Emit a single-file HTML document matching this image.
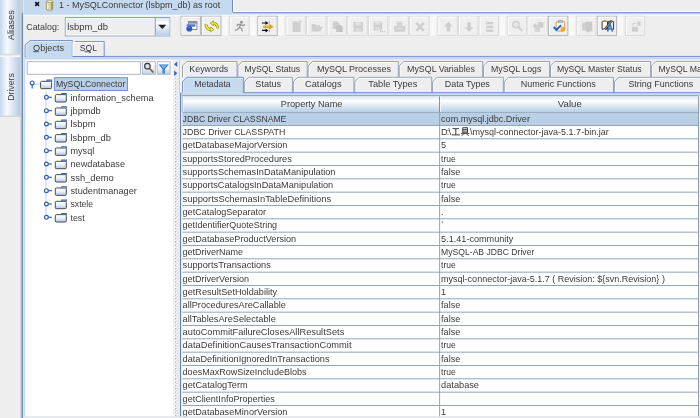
<!DOCTYPE html><html><head><meta charset="utf-8"><title>SQuirreL</title>
<style>html,body{margin:0;padding:0;background:#eeeeee;overflow:hidden}svg{display:block}text{font-family:"Liberation Sans",sans-serif;}</style></head><body>
<svg width="700" height="418" viewBox="0 0 700 418">
<defs>
<linearGradient id="gh" x1="0" y1="0" x2="1" y2="0"><stop offset="0" stop-color="#c3d7ef"/><stop offset="0.35" stop-color="#f7fafd"/><stop offset="0.65" stop-color="#d9e5f2"/><stop offset="1" stop-color="#b3cbe6"/></linearGradient>
<linearGradient id="gv" x1="0" y1="0" x2="0" y2="1"><stop offset="0" stop-color="#dde8f3"/><stop offset="0.3" stop-color="#ffffff"/><stop offset="0.6" stop-color="#dde8f3"/><stop offset="1" stop-color="#b8cfe5"/></linearGradient>
<linearGradient id="gf" x1="0" y1="0" x2="0" y2="1"><stop offset="0" stop-color="#ffffff"/><stop offset="0.6" stop-color="#e6eef7"/><stop offset="1" stop-color="#b8cfe5"/></linearGradient>
<linearGradient id="gfo" x1="0" y1="0" x2="0" y2="1"><stop offset="0" stop-color="#ffffff"/><stop offset="0.45" stop-color="#eef3fa"/><stop offset="1" stop-color="#a9c6ea"/></linearGradient>
</defs>
<rect x="0.00" y="0.00" width="700.00" height="418.00" fill="#eeeeee" />
<g opacity="0.999">
<rect x="0.00" y="0.00" width="20.20" height="54.20" fill="url(#gh)" />
<rect x="0.00" y="57.00" width="20.20" height="58.80" fill="url(#gh)" />
<rect x="0.00" y="54.20" width="20.20" height="1.30" fill="#cfd3d8" />
<rect x="0.00" y="55.50" width="20.20" height="1.50" fill="#f6f8fb" />
<rect x="0.00" y="115.80" width="20.20" height="1.20" fill="#cfd3d8" />
<rect x="20.20" y="0.00" width="1.40" height="418.00" fill="#cacdd1" />
<rect x="21.60" y="0.00" width="1.50" height="12.60" fill="#b7c8e2" />
<rect x="21.60" y="12.60" width="1.50" height="405.40" fill="#6b8ac6" />
<rect x="23.10" y="0.00" width="1.00" height="418.00" fill="#dfe8f5" />
<text transform="translate(14.3,25.2) rotate(-90)" text-anchor="middle" font-size="9.17" fill="#3a3a3a" textLength="30" lengthAdjust="spacingAndGlyphs">Aliases</text>
<text transform="translate(14.3,87) rotate(-90)" text-anchor="middle" font-size="9.17" fill="#3a3a3a" textLength="27.6" lengthAdjust="spacingAndGlyphs">Drivers</text>
<rect x="24.00" y="0.00" width="208.00" height="14.70" fill="#c6daef" />
<rect x="232.00" y="0.00" width="1.00" height="12.50" fill="#6b8ac6" />
<rect x="233.00" y="0.00" width="1.00" height="12.00" fill="#ffffff" />
<rect x="233.00" y="11.90" width="467.00" height="1.20" fill="#7f9acd" />
<rect x="234.00" y="11.00" width="466.00" height="1.00" fill="#ffffff" />
<rect x="24.00" y="13.00" width="208.00" height="1.80" fill="#c6daef" />
<rect x="233.00" y="13.10" width="467.00" height="0.90" fill="#b9cbe6" />
<rect x="233.00" y="14.00" width="467.00" height="0.90" fill="#dbe4f0" />
<rect x="24.20" y="14.80" width="675.80" height="1.30" fill="#f6f8fb" />
<path d="M35.2 2.1 L39 5.9 M39 2.1 L35.2 5.9" stroke="#111" stroke-width="1.5"/>
<g><rect x="46.4" y="1.2" width="6.4" height="8" fill="#d9d29a"/><rect x="46.4" y="1.2" width="2" height="8" fill="#f2eecb"/><rect x="51" y="1.2" width="1.8" height="8" fill="#a89e5a"/><ellipse cx="49.6" cy="1.4" rx="3.2" ry="1.3" fill="#eee9c0" stroke="#8f8750" stroke-width="0.6"/><path d="M46.4 1.2 V9 A3.2 1.3 0 0 0 52.8 9 V1.2" fill="none" stroke="#8f8750" stroke-width="0.7"/></g>
<text x="59.00" y="7.60" fill="#3a3a3a" font-size="9.17" text-anchor="start" textLength="161.3" lengthAdjust="spacingAndGlyphs" >1 - MySQLConnector (lsbpm_db) as root</text>
<text x="26.30" y="29.80" fill="#3a3a3a" font-size="9.17" text-anchor="start" textLength="33" lengthAdjust="spacingAndGlyphs" >Catalog:</text>
<rect x="65.30" y="17.60" width="104.40" height="18.30" fill="#eeeeee" stroke="#7b94c2" stroke-width="0.9"/>
<rect x="66.20" y="18.50" width="102.60" height="16.50" fill="none" stroke="#f8f9fb" stroke-width="0.8"/>
<rect x="155.30" y="18.10" width="14.00" height="17.30" fill="url(#gv)" />
<line x1="155.30" y1="18.00" x2="155.30" y2="35.50" stroke="#7b94c2" stroke-width="0.9" />
<path d="M158.2 24.8 h8.2 l-4.1 4.2 z" fill="#222"/>
<text x="67.20" y="29.80" fill="#3a3a3a" font-size="9.17" text-anchor="start" textLength="40.8" lengthAdjust="spacingAndGlyphs" >lsbpm_db</text>
<rect x="222.06" y="16.60" width="5.60" height="18.80" fill="#f8f8f8" />
<rect x="250.19" y="16.60" width="5.60" height="18.80" fill="#f8f8f8" />
<rect x="278.32" y="16.60" width="5.60" height="18.80" fill="#f8f8f8" />
<rect x="430.23" y="16.60" width="5.60" height="18.80" fill="#f8f8f8" />
<rect x="499.62" y="16.60" width="5.60" height="18.80" fill="#f8f8f8" />
<rect x="569.01" y="16.60" width="5.60" height="18.80" fill="#f8f8f8" />
<rect x="617.77" y="16.60" width="5.60" height="18.80" fill="#f8f8f8" />
<rect x="181.00" y="16.20" width="19.30" height="19.40" fill="#efefef" stroke="#a4a8ae" stroke-width="0.75"/>
<path d="M182.00 34.70 V17.2 H199.30" fill="none" stroke="#ffffff" stroke-width="0.9"/>
<rect x="201.63" y="16.20" width="19.30" height="19.40" fill="#efefef" stroke="#a4a8ae" stroke-width="0.75"/>
<path d="M202.63 34.70 V17.2 H219.93" fill="none" stroke="#ffffff" stroke-width="0.9"/>
<rect x="229.76" y="16.20" width="19.30" height="19.40" fill="#efefef" stroke="#d4d6d8" stroke-width="0.75"/>
<path d="M230.76 34.70 V17.2 H248.06" fill="none" stroke="#ffffff" stroke-width="0.9"/>
<rect x="257.89" y="16.20" width="19.30" height="19.40" fill="#efefef" stroke="#a4a8ae" stroke-width="0.75"/>
<path d="M258.89 34.70 V17.2 H276.19" fill="none" stroke="#ffffff" stroke-width="0.9"/>
<rect x="286.02" y="16.20" width="19.30" height="19.40" fill="#efefef" stroke="#d4d6d8" stroke-width="0.75"/>
<path d="M287.02 34.70 V17.2 H304.32" fill="none" stroke="#ffffff" stroke-width="0.9"/>
<rect x="306.65" y="16.20" width="19.30" height="19.40" fill="#efefef" stroke="#d4d6d8" stroke-width="0.75"/>
<path d="M307.65 34.70 V17.2 H324.95" fill="none" stroke="#ffffff" stroke-width="0.9"/>
<rect x="327.28" y="16.20" width="19.30" height="19.40" fill="#efefef" stroke="#d4d6d8" stroke-width="0.75"/>
<path d="M328.28 34.70 V17.2 H345.58" fill="none" stroke="#ffffff" stroke-width="0.9"/>
<rect x="347.91" y="16.20" width="19.30" height="19.40" fill="#efefef" stroke="#d4d6d8" stroke-width="0.75"/>
<path d="M348.91 34.70 V17.2 H366.21" fill="none" stroke="#ffffff" stroke-width="0.9"/>
<rect x="368.54" y="16.20" width="19.30" height="19.40" fill="#efefef" stroke="#d4d6d8" stroke-width="0.75"/>
<path d="M369.54 34.70 V17.2 H386.84" fill="none" stroke="#ffffff" stroke-width="0.9"/>
<rect x="389.17" y="16.20" width="19.30" height="19.40" fill="#efefef" stroke="#d4d6d8" stroke-width="0.75"/>
<path d="M390.17 34.70 V17.2 H407.47" fill="none" stroke="#ffffff" stroke-width="0.9"/>
<rect x="409.80" y="16.20" width="19.30" height="19.40" fill="#efefef" stroke="#d4d6d8" stroke-width="0.75"/>
<path d="M410.80 34.70 V17.2 H428.10" fill="none" stroke="#ffffff" stroke-width="0.9"/>
<rect x="437.93" y="16.20" width="19.30" height="19.40" fill="#efefef" stroke="#d4d6d8" stroke-width="0.75"/>
<path d="M438.93 34.70 V17.2 H456.23" fill="none" stroke="#ffffff" stroke-width="0.9"/>
<rect x="458.56" y="16.20" width="19.30" height="19.40" fill="#efefef" stroke="#d4d6d8" stroke-width="0.75"/>
<path d="M459.56 34.70 V17.2 H476.86" fill="none" stroke="#ffffff" stroke-width="0.9"/>
<rect x="479.19" y="16.20" width="19.30" height="19.40" fill="#efefef" stroke="#d4d6d8" stroke-width="0.75"/>
<path d="M480.19 34.70 V17.2 H497.49" fill="none" stroke="#ffffff" stroke-width="0.9"/>
<rect x="507.32" y="16.20" width="19.30" height="19.40" fill="#efefef" stroke="#d4d6d8" stroke-width="0.75"/>
<path d="M508.32 34.70 V17.2 H525.62" fill="none" stroke="#ffffff" stroke-width="0.9"/>
<rect x="527.95" y="16.20" width="19.30" height="19.40" fill="#efefef" stroke="#d4d6d8" stroke-width="0.75"/>
<path d="M528.95 34.70 V17.2 H546.25" fill="none" stroke="#ffffff" stroke-width="0.9"/>
<rect x="548.58" y="16.20" width="19.30" height="19.40" fill="#efefef" stroke="#a4a8ae" stroke-width="0.75"/>
<path d="M549.58 34.70 V17.2 H566.88" fill="none" stroke="#ffffff" stroke-width="0.9"/>
<rect x="576.71" y="16.20" width="19.30" height="19.40" fill="#efefef" stroke="#d4d6d8" stroke-width="0.75"/>
<path d="M577.71 34.70 V17.2 H595.01" fill="none" stroke="#ffffff" stroke-width="0.9"/>
<rect x="597.34" y="16.20" width="19.30" height="19.40" fill="#efefef" stroke="#a4a8ae" stroke-width="0.75"/>
<path d="M598.34 34.70 V17.2 H615.64" fill="none" stroke="#ffffff" stroke-width="0.9"/>
<rect x="625.47" y="16.20" width="19.30" height="19.40" fill="#efefef" stroke="#d4d6d8" stroke-width="0.75"/>
<path d="M626.47 34.70 V17.2 H643.77" fill="none" stroke="#ffffff" stroke-width="0.9"/>
<g transform="translate(181.00,16.20)"><rect x="7.5" y="5.5" width="8.4" height="7.8" fill="#fff" stroke="#777" stroke-width="0.85"/><rect x="7.5" y="5.5" width="8.4" height="1.9" fill="#8a8a8a"/><rect x="5.6" y="8.1" width="9" height="2.4" rx="1.1" fill="#3a6fcf"/><ellipse cx="8.3" cy="12.5" rx="3" ry="2.8" fill="#2a5cb8"/><path d="M6 8.8 h7.6" stroke="#86abec" stroke-width="0.7"/><path d="M6.6 11.6 q1.6 -1 3 0.2" stroke="#6d97e0" stroke-width="0.7" fill="none"/></g>
<g transform="translate(201.63,16.20)"><g stroke-linejoin="round"><path d="M16 12.2 A4.3 4.9 0 0 0 11.9 7" fill="none" stroke="#84841c" stroke-width="3"/><path d="M4.5 8.2 A4.3 4.9 0 0 0 8.8 13.4" fill="none" stroke="#84841c" stroke-width="3"/><path d="M8.3 7 L12.1 4 V10 Z" fill="#84841c"/><path d="M12.5 13.4 L8.7 10.4 V16.4 Z" fill="#84841c"/><path d="M16 12 A4.3 4.9 0 0 0 11.9 7" fill="none" stroke="#eeea18" stroke-width="1.9"/><path d="M4.5 8.4 A4.3 4.9 0 0 0 8.8 13.4" fill="none" stroke="#eeea18" stroke-width="1.9"/><path d="M9.2 7 L11.7 5 V9 Z" fill="#f6f22a"/><path d="M11.6 13.4 L9.1 11.4 V15.4 Z" fill="#f6f22a"/></g></g>
<g transform="translate(229.76,16.20)"><circle cx="11.7" cy="6.1" r="1.45" fill="#9a9a9a"/><path d="M11.2 7.6 L9.7 11 L11.9 12.6 L12.6 15.2 M9.7 11 L7.7 13.5 L5 14.1 M11 8.3 L8.2 8.1 L6.9 9.8 M11.2 8.5 L13.4 9.7 L15.1 8.1" fill="none" stroke="#9a9a9a" stroke-width="1.35" stroke-linejoin="round"/></g>
<g transform="translate(257.89,16.20)"><path d="M4.1 6.8 h5 M4.1 14.2 h5" stroke="#111" stroke-width="1.15"/><path d="M7.6 4.8 l2.9 2 -2.9 2z M7.6 12.2 l2.9 2 -2.9 2z" fill="#111"/><path d="M11.4 4.8 v11" stroke="#a9a6d8" stroke-width="1"/><path d="M5.4 10.5 h7" stroke="#d9a21c" stroke-width="2.4"/><path d="M5.6 9.8 h6.6" stroke="#f2d060" stroke-width="0.8"/><path d="M11.6 7.6 l4.2 2.9 -4.2 2.9z" fill="#e3a81a"/></g>
<g transform="translate(286.52,17.10)"><path d="M6 4.5 h5.5 l2.5 2.5 v8 h-8z" fill="#cfcfcf"/><path d="M12 3 l3 1 -1 3z" fill="#cfcfcf"/></g>
<g transform="translate(307.15,17.10)"><path d="M4.5 14.5 v-7.5 h3.5 l1 1.2 h4 v1.5 h2.8 l-2.6 4.8z" fill="#cfcfcf"/></g>
<g transform="translate(327.78,17.10)"><path d="M5 4.5 h4.5 l2 2 v5.5 h-6.5z" fill="#cfcfcf"/><path d="M8.5 8 h4.5 l2 2 v5 h-6.5z" fill="#c4c4c4"/></g>
<g transform="translate(348.41,17.10)"><rect x="5" y="5" width="9.5" height="9.5" fill="#cfcfcf"/><rect x="7" y="5" width="5.5" height="3.4" fill="#e2e2e2"/><rect x="7" y="10.8" width="5.5" height="3.7" fill="#dcdcdc"/></g>
<g transform="translate(369.04,17.10)"><rect x="4.6" y="4.6" width="8.6" height="8.6" fill="#cfcfcf"/><rect x="6.4" y="4.6" width="5" height="3" fill="#e2e2e2"/><rect x="6.4" y="9.8" width="5" height="3.4" fill="#dcdcdc"/><rect x="11" y="14" width="1" height="1" fill="#bbb"/><rect x="12.8" y="14" width="1" height="1" fill="#bbb"/><rect x="14.6" y="14" width="1" height="1" fill="#bbb"/></g>
<g transform="translate(389.67,17.10)"><rect x="4.5" y="8.8" width="11" height="5.8" rx="0.8" fill="#cfcfcf"/><rect x="7" y="4.6" width="5.5" height="5" fill="#d6d6d6"/><rect x="6.5" y="11" width="7" height="1" fill="#e4e4e4"/></g>
<g transform="translate(410.30,17.10)"><path d="M6 5.8 L13.6 13.8 M13.6 5.8 L6 13.8" stroke="#cfcfcf" stroke-width="2.6"/></g>
<g transform="translate(438.43,17.10)"><path d="M10 4.6 l4.4 4.8 h-2.6 v5 h-3.6 v-5 h-2.6z" fill="#cfcfcf"/></g>
<g transform="translate(459.06,17.10)"><path d="M10 15 l4.4 -4.8 h-2.6 v-5 h-3.6 v5 h-2.6z" fill="#cfcfcf"/></g>
<g transform="translate(479.69,17.10)"><rect x="6.4" y="4.8" width="7" height="2.4" fill="#cfcfcf"/><rect x="6.4" y="8.6" width="7" height="2.4" fill="#cfcfcf"/><rect x="6.4" y="12.4" width="7" height="2.4" fill="#cfcfcf"/></g>
<g transform="translate(507.32,16.20)"><circle cx="8.6" cy="8.4" r="3.2" fill="#e6e6e6" stroke="#cfcfcf" stroke-width="1.4"/><path d="M11 10.8 L15 14.8" stroke="#cfcfcf" stroke-width="2.2"/></g>
<g transform="translate(528.45,17.10)"><rect x="9.4" y="5" width="5.6" height="5.6" fill="#cfcfcf"/><rect x="6" y="10" width="5.6" height="4.8" fill="#d4d4d4"/><path d="M4.2 8.6 l3.6 -3 v2 h2.4 v2 h-2.4 v2z" fill="#cfcfcf"/></g>
<g transform="translate(548.58,16.20)"><rect x="7.6" y="5.3" width="8.6" height="9.6" rx="1.6" fill="#fdfbf4" stroke="#e09a30" stroke-width="1"/><rect x="9.6" y="4.2" width="4.6" height="2.2" rx="0.6" fill="#b9bec8" stroke="#7d8594" stroke-width="0.5"/><circle cx="14.1" cy="12.7" r="2.3" fill="#eda41e"/><circle cx="13.6" cy="12.1" r="0.8" fill="#f9d77a"/><path d="M5.2 10.8 l2.7 3 l4.6 -4.8" fill="none" stroke="#1766d6" stroke-width="1.9"/></g>
<g transform="translate(577.21,17.10)"><rect x="4.8" y="5.4" width="5" height="8" fill="#cfcfcf"/><rect x="8.6" y="4.6" width="6.4" height="9.6" fill="#c9c9c9"/><path d="M9 14 l3 1.6 v-3z" fill="#c4c4c4"/></g>
<g transform="translate(597.34,16.20)"><path d="M4.8 5.4 q2.7 -1.3 5.4 0 v7.8 q-2.7 -1.3 -5.4 0z" fill="#fbfbf8" stroke="#1c2440" stroke-width="0.9"/><path d="M10.8 5.4 q2.7 -1.3 5.4 0 v7.8 q-2.7 -1.3 -5.4 0z" fill="#e9ecf4" stroke="#1c2440" stroke-width="0.9"/><path d="M5 5.2 q2.6 -1.3 5.2 0" stroke="#c9a03c" stroke-width="1" fill="none"/><path d="M14.4 4.6 L7.6 12.8" stroke="#3a3420" stroke-width="2"/><path d="M14.4 4.6 L7.8 12.6" stroke="#c9a548" stroke-width="1"/><path d="M12.6 7.4 L10.3 15.4 M12.6 7.4 L15 15.4" stroke="#2a7ae2" stroke-width="1.5" fill="none"/></g>
<g transform="translate(625.97,17.10)"><rect x="6" y="9.6" width="6" height="5" fill="#cfcfcf"/><rect x="11.6" y="4.4" width="3" height="4.2" fill="#cfcfcf"/><path d="M7 8.6 v-2.4 h3.4" fill="none" stroke="#cfcfcf" stroke-width="1"/></g>
<rect x="24.00" y="56.90" width="676.00" height="2.20" fill="#c6daef" />
<rect x="24.00" y="59.10" width="676.00" height="0.80" fill="#dfe4ea" />
<rect x="104.60" y="55.90" width="595.40" height="1.10" fill="#809bd0" />
<path d="M25.2 57 V45 L30.2 40.6 H72.4 V57 z" fill="#c6daef"/>
<path d="M25.2 57 V45 L30.2 40.6 H72.4 V56" fill="none" stroke="#6b8ac6" stroke-width="0.95"/>
<path d="M26.2 56 V45.4 L30.6 41.6 H71.6" fill="none" stroke="#e8f0fa" stroke-width="0.8"/>
<path d="M72.4 56 V41.6 H104.2 V56" fill="#eeeeee" />
<path d="M75 41.6 H104.2 V56.4" fill="none" stroke="#6b8ac6" stroke-width="0.95"/>
<path d="M73.2 56 V42.5 H103.4" fill="none" stroke="#ffffff" stroke-width="0.8"/>
<rect x="72.40" y="56.00" width="32.20" height="1.00" fill="#6b8ac6" />
<text x="48.60" y="50.50" fill="#3a3a3a" font-size="9.17" text-anchor="middle" textLength="31" lengthAdjust="spacingAndGlyphs" >Objects</text>
<line x1="33.20" y1="51.70" x2="38.80" y2="51.70" stroke="#333" stroke-width="0.8" />
<text x="88.40" y="50.50" fill="#3a3a3a" font-size="9.17" text-anchor="middle" textLength="17.2" lengthAdjust="spacingAndGlyphs" >SQL</text>
<line x1="84.60" y1="51.70" x2="90.40" y2="51.70" stroke="#333" stroke-width="0.8" />
<rect x="24.80" y="59.90" width="148.60" height="358.10" fill="#ffffff" />
<rect x="24.10" y="56.90" width="1.20" height="361.10" fill="#c6daef" />
<rect x="27.20" y="61.70" width="113.30" height="12.60" fill="#ffffff" stroke="#a3afbd" stroke-width="0.9"/>
<rect x="142.40" y="61.70" width="12.90" height="12.60" fill="url(#gf)" stroke="#a8b4c2" stroke-width="0.9"/>
<rect x="157.20" y="61.70" width="12.90" height="12.60" fill="url(#gf)" stroke="#a8b4c2" stroke-width="0.9"/>
<circle cx="147.4" cy="66.2" r="2.8" fill="#d9dcef" stroke="#333" stroke-width="1.1"/><path d="M149.6 68.6 L153.4 72.6" stroke="#8a4a20" stroke-width="1.5"/>
<path d="M158.6 64.6 h10.2 l-3.9 4.4 v4.6 h-2.4 v-4.6z" fill="#2d78c8"/><path d="M160.6 65.3 h6.2 l-2.6 3 h-1z" fill="#7db4ea"/><path d="M163.4 69 v4" stroke="#5a9ce0" stroke-width="0.8"/>
<rect x="54.30" y="77.70" width="73.20" height="12.70" fill="#b8cfe5" stroke="#6382bf" stroke-width="0.85"/>
<line x1="34.40" y1="84.10" x2="40.00" y2="84.10" stroke="#b9cdec" stroke-width="1" />
<circle cx="32.20" cy="82.90" r="1.9" fill="#fff" stroke="#2f60c2" stroke-width="1.2"/><path d="M32.20 84.80 v3.6" stroke="#2f60c2" stroke-width="1.2"/>
<g transform="translate(40.20,79.50)"><rect x="0.4" y="1.8" width="11" height="7.4" rx="1" fill="url(#gfo)" stroke="#4a4a4a" stroke-width="1"/><path d="M6.8 1.8 v-1.2 h4.6 v1.6" fill="none" stroke="#3565c0" stroke-width="1.1"/></g>
<text x="56.00" y="87.20" fill="#3a3a3a" font-size="9.17" text-anchor="start" textLength="69.3" lengthAdjust="spacingAndGlyphs" >MySQLConnector</text>
<line x1="46.00" y1="90.80" x2="46.00" y2="217.47" stroke="#b9cdec" stroke-width="1" />
<circle cx="46.40" cy="97.33" r="1.9" fill="#fff" stroke="#2f60c2" stroke-width="1.2"/><path d="M48.30 97.33 h3.6" stroke="#2f60c2" stroke-width="1.2"/>
<g transform="translate(54.90,92.83)"><rect x="0.4" y="1.8" width="11" height="7.4" rx="1" fill="url(#gfo)" stroke="#4a4a4a" stroke-width="1"/><path d="M6.8 1.8 v-1.2 h4.6 v1.6" fill="none" stroke="#3565c0" stroke-width="1.1"/></g>
<text x="70.50" y="100.53" fill="#3a3a3a" font-size="9.17" text-anchor="start" textLength="83.1" lengthAdjust="spacingAndGlyphs" >information_schema</text>
<circle cx="46.40" cy="110.67" r="1.9" fill="#fff" stroke="#2f60c2" stroke-width="1.2"/><path d="M48.30 110.67 h3.6" stroke="#2f60c2" stroke-width="1.2"/>
<g transform="translate(54.90,106.17)"><rect x="0.4" y="1.8" width="11" height="7.4" rx="1" fill="url(#gfo)" stroke="#4a4a4a" stroke-width="1"/><path d="M6.8 1.8 v-1.2 h4.6 v1.6" fill="none" stroke="#3565c0" stroke-width="1.1"/></g>
<text x="70.50" y="113.87" fill="#3a3a3a" font-size="9.17" text-anchor="start" textLength="30.1" lengthAdjust="spacingAndGlyphs" >jbpmdb</text>
<circle cx="46.40" cy="124.00" r="1.9" fill="#fff" stroke="#2f60c2" stroke-width="1.2"/><path d="M48.30 124.00 h3.6" stroke="#2f60c2" stroke-width="1.2"/>
<g transform="translate(54.90,119.50)"><rect x="0.4" y="1.8" width="11" height="7.4" rx="1" fill="url(#gfo)" stroke="#4a4a4a" stroke-width="1"/><path d="M6.8 1.8 v-1.2 h4.6 v1.6" fill="none" stroke="#3565c0" stroke-width="1.1"/></g>
<text x="70.50" y="127.20" fill="#3a3a3a" font-size="9.17" text-anchor="start" textLength="25.0" lengthAdjust="spacingAndGlyphs" >lsbpm</text>
<circle cx="46.40" cy="137.33" r="1.9" fill="#fff" stroke="#2f60c2" stroke-width="1.2"/><path d="M48.30 137.33 h3.6" stroke="#2f60c2" stroke-width="1.2"/>
<g transform="translate(54.90,132.83)"><rect x="0.4" y="1.8" width="11" height="7.4" rx="1" fill="url(#gfo)" stroke="#4a4a4a" stroke-width="1"/><path d="M6.8 1.8 v-1.2 h4.6 v1.6" fill="none" stroke="#3565c0" stroke-width="1.1"/></g>
<text x="70.50" y="140.53" fill="#3a3a3a" font-size="9.17" text-anchor="start" textLength="40.5" lengthAdjust="spacingAndGlyphs" >lsbpm_db</text>
<circle cx="46.40" cy="150.67" r="1.9" fill="#fff" stroke="#2f60c2" stroke-width="1.2"/><path d="M48.30 150.67 h3.6" stroke="#2f60c2" stroke-width="1.2"/>
<g transform="translate(54.90,146.17)"><rect x="0.4" y="1.8" width="11" height="7.4" rx="1" fill="url(#gfo)" stroke="#4a4a4a" stroke-width="1"/><path d="M6.8 1.8 v-1.2 h4.6 v1.6" fill="none" stroke="#3565c0" stroke-width="1.1"/></g>
<text x="70.50" y="153.87" fill="#3a3a3a" font-size="9.17" text-anchor="start" textLength="23.7" lengthAdjust="spacingAndGlyphs" >mysql</text>
<circle cx="46.40" cy="164.00" r="1.9" fill="#fff" stroke="#2f60c2" stroke-width="1.2"/><path d="M48.30 164.00 h3.6" stroke="#2f60c2" stroke-width="1.2"/>
<g transform="translate(54.90,159.50)"><rect x="0.4" y="1.8" width="11" height="7.4" rx="1" fill="url(#gfo)" stroke="#4a4a4a" stroke-width="1"/><path d="M6.8 1.8 v-1.2 h4.6 v1.6" fill="none" stroke="#3565c0" stroke-width="1.1"/></g>
<text x="70.50" y="167.20" fill="#3a3a3a" font-size="9.17" text-anchor="start" textLength="54.5" lengthAdjust="spacingAndGlyphs" >newdatabase</text>
<circle cx="46.40" cy="177.33" r="1.9" fill="#fff" stroke="#2f60c2" stroke-width="1.2"/><path d="M48.30 177.33 h3.6" stroke="#2f60c2" stroke-width="1.2"/>
<g transform="translate(54.90,172.83)"><rect x="0.4" y="1.8" width="11" height="7.4" rx="1" fill="url(#gfo)" stroke="#4a4a4a" stroke-width="1"/><path d="M6.8 1.8 v-1.2 h4.6 v1.6" fill="none" stroke="#3565c0" stroke-width="1.1"/></g>
<text x="70.50" y="180.53" fill="#3a3a3a" font-size="9.17" text-anchor="start" textLength="43.3" lengthAdjust="spacingAndGlyphs" >ssh_demo</text>
<circle cx="46.40" cy="190.67" r="1.9" fill="#fff" stroke="#2f60c2" stroke-width="1.2"/><path d="M48.30 190.67 h3.6" stroke="#2f60c2" stroke-width="1.2"/>
<g transform="translate(54.90,186.17)"><rect x="0.4" y="1.8" width="11" height="7.4" rx="1" fill="url(#gfo)" stroke="#4a4a4a" stroke-width="1"/><path d="M6.8 1.8 v-1.2 h4.6 v1.6" fill="none" stroke="#3565c0" stroke-width="1.1"/></g>
<text x="70.50" y="193.87" fill="#3a3a3a" font-size="9.17" text-anchor="start" textLength="66.3" lengthAdjust="spacingAndGlyphs" >studentmanager</text>
<circle cx="46.40" cy="204.00" r="1.9" fill="#fff" stroke="#2f60c2" stroke-width="1.2"/><path d="M48.30 204.00 h3.6" stroke="#2f60c2" stroke-width="1.2"/>
<g transform="translate(54.90,199.50)"><rect x="0.4" y="1.8" width="11" height="7.4" rx="1" fill="url(#gfo)" stroke="#4a4a4a" stroke-width="1"/><path d="M6.8 1.8 v-1.2 h4.6 v1.6" fill="none" stroke="#3565c0" stroke-width="1.1"/></g>
<text x="70.50" y="207.20" fill="#3a3a3a" font-size="9.17" text-anchor="start" textLength="22.6" lengthAdjust="spacingAndGlyphs" >sxtele</text>
<circle cx="46.40" cy="217.33" r="1.9" fill="#fff" stroke="#2f60c2" stroke-width="1.2"/><path d="M48.30 217.33 h3.6" stroke="#2f60c2" stroke-width="1.2"/>
<g transform="translate(54.90,212.83)"><rect x="0.4" y="1.8" width="11" height="7.4" rx="1" fill="url(#gfo)" stroke="#4a4a4a" stroke-width="1"/><path d="M6.8 1.8 v-1.2 h4.6 v1.6" fill="none" stroke="#3565c0" stroke-width="1.1"/></g>
<text x="70.50" y="220.53" fill="#3a3a3a" font-size="9.17" text-anchor="start" textLength="14.2" lengthAdjust="spacingAndGlyphs" >test</text>
<rect x="173.40" y="59.90" width="5.60" height="358.10" fill="#eeeeee" />
<pattern id="dots" x="174.2" y="60" width="3.34" height="3.34" patternUnits="userSpaceOnUse"><rect x="0" y="0" width="1.2" height="1.2" fill="#ffffff"/><rect x="0.9" y="0.9" width="1.1" height="1.1" fill="#9aa3ae"/><rect x="1.67" y="1.67" width="1.2" height="1.2" fill="#ffffff"/><rect x="2.57" y="2.57" width="1.0" height="1.0" fill="#9aa3ae"/></pattern>
<rect x="174.20" y="77.50" width="4.20" height="340.50" fill="url(#dots)" />
<path d="M177.2 61.6 v5.4 l-3.2 -2.7z" fill="#3565c0"/><path d="M174.2 70.4 v5.6 l3.2 -2.8z" fill="#3565c0"/>
<rect x="179.40" y="59.90" width="0.90" height="32.70" fill="#aeb6c0" />
<rect x="180.30" y="59.90" width="0.90" height="32.70" fill="#ffffff" />
<rect x="179.00" y="92.60" width="1.00" height="325.40" fill="#e4e9f0" />
<path d="M182.50 77.30 V65.90 L186.90 61.50 H237.00 V77.30 z" fill="#eeeeee"/>
<path d="M183.40 77.30 V66.30 L187.30 62.40 H236.20" fill="none" stroke="#ffffff" stroke-width="0.8"/>
<path d="M182.50 77.30 V65.90 L186.90 61.50 H237.00 V77.30" fill="none" stroke="#8e9bab" stroke-width="0.9"/>
<text x="208.80" y="71.90" fill="#3a3a3a" font-size="9.17" text-anchor="middle" textLength="38.9" lengthAdjust="spacingAndGlyphs" >Keywords</text>
<path d="M237.90 77.30 V65.90 L242.30 61.50 H307.20 V77.30 z" fill="#eeeeee"/>
<path d="M238.80 77.30 V66.30 L242.70 62.40 H306.40" fill="none" stroke="#ffffff" stroke-width="0.8"/>
<path d="M237.90 77.30 V65.90 L242.30 61.50 H307.20 V77.30" fill="none" stroke="#8e9bab" stroke-width="0.9"/>
<text x="272.30" y="71.90" fill="#3a3a3a" font-size="9.17" text-anchor="middle" textLength="55.5" lengthAdjust="spacingAndGlyphs" >MySQL Status</text>
<path d="M308.10 77.30 V65.90 L312.50 61.50 H398.30 V77.30 z" fill="#eeeeee"/>
<path d="M309.00 77.30 V66.30 L312.90 62.40 H397.50" fill="none" stroke="#ffffff" stroke-width="0.8"/>
<path d="M308.10 77.30 V65.90 L312.50 61.50 H398.30 V77.30" fill="none" stroke="#8e9bab" stroke-width="0.9"/>
<text x="354.00" y="71.90" fill="#3a3a3a" font-size="9.17" text-anchor="middle" textLength="74.2" lengthAdjust="spacingAndGlyphs" >MySQL Processes</text>
<path d="M399.20 77.30 V65.90 L403.60 61.50 H482.70 V77.30 z" fill="#eeeeee"/>
<path d="M400.10 77.30 V66.30 L404.00 62.40 H481.90" fill="none" stroke="#ffffff" stroke-width="0.8"/>
<path d="M399.20 77.30 V65.90 L403.60 61.50 H482.70 V77.30" fill="none" stroke="#8e9bab" stroke-width="0.9"/>
<text x="441.00" y="71.90" fill="#3a3a3a" font-size="9.17" text-anchor="middle" textLength="68" lengthAdjust="spacingAndGlyphs" >MySQL Variables</text>
<path d="M483.60 77.30 V65.90 L488.00 61.50 H549.60 V77.30 z" fill="#eeeeee"/>
<path d="M484.50 77.30 V66.30 L488.40 62.40 H548.80" fill="none" stroke="#ffffff" stroke-width="0.8"/>
<path d="M483.60 77.30 V65.90 L488.00 61.50 H549.60 V77.30" fill="none" stroke="#8e9bab" stroke-width="0.9"/>
<text x="516.20" y="71.90" fill="#3a3a3a" font-size="9.17" text-anchor="middle" textLength="50.3" lengthAdjust="spacingAndGlyphs" >MySQL Logs</text>
<path d="M550.50 77.30 V65.90 L554.90 61.50 H650.60 V77.30 z" fill="#eeeeee"/>
<path d="M551.40 77.30 V66.30 L555.30 62.40 H649.80" fill="none" stroke="#ffffff" stroke-width="0.8"/>
<path d="M550.50 77.30 V65.90 L554.90 61.50 H650.60 V77.30" fill="none" stroke="#8e9bab" stroke-width="0.9"/>
<text x="599.30" y="71.90" fill="#3a3a3a" font-size="9.17" text-anchor="middle" textLength="84.8" lengthAdjust="spacingAndGlyphs" >MySQL Master Status</text>
<path d="M651.50 77.3 V65.9 L655.90 61.5 H700" fill="none" stroke="#8e9bab" stroke-width="0.9"/>
<path d="M652.40 77.3 V66.3 L656.30 62.4 H700" fill="none" stroke="#ffffff" stroke-width="0.8"/>
<text x="658.60" y="71.90" fill="#3a3a3a" font-size="9.17" text-anchor="start" textLength="84.8" lengthAdjust="spacingAndGlyphs" >MySQL Master Status</text>
<rect x="181.20" y="92.60" width="518.80" height="3.00" fill="#c6daef" />
<path d="M182.50 92.60 V81.70 L186.90 77.30 H243.40 V92.60 z" fill="#c6daef"/>
<path d="M183.40 92.60 V82.10 L187.30 78.20 H242.60" fill="none" stroke="#e6eefa" stroke-width="0.8"/>
<path d="M182.50 92.60 V81.70 L186.90 77.30 H243.40 V92.60" fill="none" stroke="#6b8ac6" stroke-width="0.9"/>
<text x="212.50" y="86.90" fill="#3a3a3a" font-size="9.17" text-anchor="middle" textLength="36.4" lengthAdjust="spacingAndGlyphs" >Metadata</text>
<path d="M244.30 92.60 V81.70 L248.70 77.30 H292.40 V92.60 z" fill="#eeeeee"/>
<path d="M245.20 92.60 V82.10 L249.10 78.20 H291.60" fill="none" stroke="#ffffff" stroke-width="0.8"/>
<path d="M244.30 92.60 V81.70 L248.70 77.30 H292.40 V92.60" fill="none" stroke="#8e9bab" stroke-width="0.9"/>
<text x="268.20" y="86.90" fill="#3a3a3a" font-size="9.17" text-anchor="middle" textLength="25.7" lengthAdjust="spacingAndGlyphs" >Status</text>
<path d="M293.30 92.60 V81.70 L297.70 77.30 H353.90 V92.60 z" fill="#eeeeee"/>
<path d="M294.20 92.60 V82.10 L298.10 78.20 H353.10" fill="none" stroke="#ffffff" stroke-width="0.8"/>
<path d="M293.30 92.60 V81.70 L297.70 77.30 H353.90 V92.60" fill="none" stroke="#8e9bab" stroke-width="0.9"/>
<text x="323.30" y="86.90" fill="#3a3a3a" font-size="9.17" text-anchor="middle" textLength="36.5" lengthAdjust="spacingAndGlyphs" >Catalogs</text>
<path d="M354.80 92.60 V81.70 L359.20 77.30 H431.70 V92.60 z" fill="#eeeeee"/>
<path d="M355.70 92.60 V82.10 L359.60 78.20 H430.90" fill="none" stroke="#ffffff" stroke-width="0.8"/>
<path d="M354.80 92.60 V81.70 L359.20 77.30 H431.70 V92.60" fill="none" stroke="#8e9bab" stroke-width="0.9"/>
<text x="392.80" y="86.90" fill="#3a3a3a" font-size="9.17" text-anchor="middle" textLength="49" lengthAdjust="spacingAndGlyphs" >Table Types</text>
<path d="M432.60 92.60 V81.70 L437.00 77.30 H503.30 V92.60 z" fill="#eeeeee"/>
<path d="M433.50 92.60 V82.10 L437.40 78.20 H502.50" fill="none" stroke="#ffffff" stroke-width="0.8"/>
<path d="M432.60 92.60 V81.70 L437.00 77.30 H503.30 V92.60" fill="none" stroke="#8e9bab" stroke-width="0.9"/>
<text x="467.30" y="86.90" fill="#3a3a3a" font-size="9.17" text-anchor="middle" textLength="45.1" lengthAdjust="spacingAndGlyphs" >Data Types</text>
<path d="M504.20 92.60 V81.70 L508.60 77.30 H613.50 V92.60 z" fill="#eeeeee"/>
<path d="M505.10 92.60 V82.10 L509.00 78.20 H612.70" fill="none" stroke="#ffffff" stroke-width="0.8"/>
<path d="M504.20 92.60 V81.70 L508.60 77.30 H613.50 V92.60" fill="none" stroke="#8e9bab" stroke-width="0.9"/>
<text x="558.30" y="86.90" fill="#3a3a3a" font-size="9.17" text-anchor="middle" textLength="75.1" lengthAdjust="spacingAndGlyphs" >Numeric Functions</text>
<path d="M614.40 92.60 V81.70 L618.80 77.30 H700.60 V92.60 z" fill="#eeeeee"/>
<path d="M615.30 92.60 V82.10 L619.20 78.20 H699.80" fill="none" stroke="#ffffff" stroke-width="0.8"/>
<path d="M614.40 92.60 V81.70 L618.80 77.30 H700.60 V92.60" fill="none" stroke="#8e9bab" stroke-width="0.9"/>
<text x="660.80" y="86.90" fill="#3a3a3a" font-size="9.17" text-anchor="middle" textLength="64.8" lengthAdjust="spacingAndGlyphs" >String Functions</text>
<rect x="243.40" y="92.20" width="456.60" height="0.90" fill="#6b8ac6" />
<rect x="180.00" y="92.60" width="1.15" height="325.40" fill="#5f82c6" />
<rect x="181.15" y="95.60" width="0.70" height="322.40" fill="#eef3fa" />
<rect x="182.40" y="95.60" width="516.40" height="322.40" fill="#ffffff" />
<rect x="181.80" y="95.30" width="517.00" height="1.00" fill="#7f8c9b" />
<rect x="182.40" y="96.40" width="515.60" height="15.80" fill="url(#gv)" />
<rect x="182.40" y="112.00" width="516.40" height="0.90" fill="#7f8c9b" />
<rect x="439.10" y="96.40" width="1.10" height="16.00" fill="#77879a" />
<rect x="440.10" y="96.40" width="0.80" height="15.60" fill="#ffffff" />
<rect x="698.00" y="96.40" width="0.90" height="321.60" fill="#8593a3" />
<rect x="181.80" y="96.30" width="0.90" height="15.80" fill="#8593a3" />
<rect x="182.70" y="96.30" width="0.80" height="15.60" fill="#ffffff" />
<text x="311.60" y="107.30" fill="#3a3a3a" font-size="9.17" text-anchor="middle" textLength="61.5" lengthAdjust="spacingAndGlyphs" >Property Name</text>
<text x="569.80" y="107.30" fill="#3a3a3a" font-size="9.17" text-anchor="middle" textLength="24" lengthAdjust="spacingAndGlyphs" >Value</text>
<rect x="182.40" y="112.60" width="515.60" height="12.53" fill="#b8cfe5" />
<rect x="182.40" y="125.03" width="515.60" height="0.90" fill="#8a9bb2" />
<text x="182.60" y="121.75" fill="#3a3a3a" font-size="9.17" text-anchor="start" textLength="103.8" lengthAdjust="spacingAndGlyphs" >JDBC Driver CLASSNAME</text>
<text x="441.10" y="121.75" fill="#3a3a3a" font-size="9.17" text-anchor="start" textLength="88.8" lengthAdjust="spacingAndGlyphs" >com.mysql.jdbc.Driver</text>
<rect x="182.40" y="138.37" width="515.60" height="0.90" fill="#8a9bb2" />
<text x="182.60" y="135.08" fill="#3a3a3a" font-size="9.17" text-anchor="start" textLength="102.8" lengthAdjust="spacingAndGlyphs" >JDBC Driver CLASSPATH</text>
<text x="441.10" y="135.08" fill="#3a3a3a" font-size="9.17" textLength="10" lengthAdjust="spacing">D:\</text>
<g transform="translate(451.70,127.48)" stroke="#333" stroke-width="0.95" fill="none"><path d="M0.8 1.2 H7.4 M4.1 1.2 V7.2 M0 7.4 H8.2"/></g>
<g transform="translate(460.90,127.18)" stroke="#333" stroke-width="0.9" fill="none"><path d="M1.8 0.5 H6.6 V5.6 H1.8 Z M1.8 2.2 H6.6 M1.8 3.9 H6.6 M0 6.4 H8.4 M2.6 7 L0.6 8.6 M5.8 7 L7.8 8.6"/></g>
<text x="469.90" y="135.08" fill="#3a3a3a" font-size="9.17" text-anchor="start" textLength="138.8" lengthAdjust="spacingAndGlyphs" >\mysql-connector-java-5.1.7-bin.jar</text>
<rect x="182.40" y="151.70" width="515.60" height="0.90" fill="#8a9bb2" />
<text x="182.60" y="148.42" fill="#3a3a3a" font-size="9.17" text-anchor="start" textLength="104.8" lengthAdjust="spacingAndGlyphs" >getDatabaseMajorVersion</text>
<text x="441.10" y="148.42" fill="#3a3a3a" font-size="9.17" text-anchor="start" >5</text>
<rect x="182.40" y="165.03" width="515.60" height="0.90" fill="#8a9bb2" />
<text x="182.60" y="161.75" fill="#3a3a3a" font-size="9.17" text-anchor="start" textLength="109.2" lengthAdjust="spacingAndGlyphs" >supportsStoredProcedures</text>
<text x="441.10" y="161.75" fill="#3a3a3a" font-size="9.17" text-anchor="start" textLength="14.7" lengthAdjust="spacingAndGlyphs" >true</text>
<rect x="182.40" y="178.37" width="515.60" height="0.90" fill="#8a9bb2" />
<text x="182.60" y="175.08" fill="#3a3a3a" font-size="9.17" text-anchor="start" textLength="152.9" lengthAdjust="spacingAndGlyphs" >supportsSchemasInDataManipulation</text>
<text x="441.10" y="175.08" fill="#3a3a3a" font-size="9.17" text-anchor="start" textLength="19.1" lengthAdjust="spacingAndGlyphs" >false</text>
<rect x="182.40" y="191.70" width="515.60" height="0.90" fill="#8a9bb2" />
<text x="182.60" y="188.42" fill="#3a3a3a" font-size="9.17" text-anchor="start" textLength="150.6" lengthAdjust="spacingAndGlyphs" >supportsCatalogsInDataManipulation</text>
<text x="441.10" y="188.42" fill="#3a3a3a" font-size="9.17" text-anchor="start" textLength="14.7" lengthAdjust="spacingAndGlyphs" >true</text>
<rect x="182.40" y="205.03" width="515.60" height="0.90" fill="#8a9bb2" />
<text x="182.60" y="201.75" fill="#3a3a3a" font-size="9.17" text-anchor="start" textLength="148.5" lengthAdjust="spacingAndGlyphs" >supportsSchemasInTableDefinitions</text>
<text x="441.10" y="201.75" fill="#3a3a3a" font-size="9.17" text-anchor="start" textLength="19.1" lengthAdjust="spacingAndGlyphs" >false</text>
<rect x="182.40" y="218.37" width="515.60" height="0.90" fill="#8a9bb2" />
<text x="182.60" y="215.08" fill="#3a3a3a" font-size="9.17" text-anchor="start" textLength="83.4" lengthAdjust="spacingAndGlyphs" >getCatalogSeparator</text>
<text x="441.10" y="215.08" fill="#3a3a3a" font-size="9.17" text-anchor="start" >.</text>
<rect x="182.40" y="231.70" width="515.60" height="0.90" fill="#8a9bb2" />
<text x="182.60" y="228.42" fill="#3a3a3a" font-size="9.17" text-anchor="start" textLength="94.5" lengthAdjust="spacingAndGlyphs" >getIdentifierQuoteString</text>
<text x="441.10" y="228.42" fill="#3a3a3a" font-size="9.17" text-anchor="start" >`</text>
<rect x="182.40" y="245.03" width="515.60" height="0.90" fill="#8a9bb2" />
<text x="182.60" y="241.75" fill="#3a3a3a" font-size="9.17" text-anchor="start" textLength="113.6" lengthAdjust="spacingAndGlyphs" >getDatabaseProductVersion</text>
<text x="441.10" y="241.75" fill="#3a3a3a" font-size="9.17" text-anchor="start" textLength="72.3" lengthAdjust="spacingAndGlyphs" >5.1.41-community</text>
<rect x="182.40" y="258.37" width="515.60" height="0.90" fill="#8a9bb2" />
<text x="182.60" y="255.08" fill="#3a3a3a" font-size="9.17" text-anchor="start" textLength="60.4" lengthAdjust="spacingAndGlyphs" >getDriverName</text>
<text x="441.10" y="255.08" fill="#3a3a3a" font-size="9.17" text-anchor="start" textLength="93.2" lengthAdjust="spacingAndGlyphs" >MySQL-AB JDBC Driver</text>
<rect x="182.40" y="271.70" width="515.60" height="0.90" fill="#8a9bb2" />
<text x="182.60" y="268.42" fill="#3a3a3a" font-size="9.17" text-anchor="start" textLength="88.3" lengthAdjust="spacingAndGlyphs" >supportsTransactions</text>
<text x="441.10" y="268.42" fill="#3a3a3a" font-size="9.17" text-anchor="start" textLength="14.7" lengthAdjust="spacingAndGlyphs" >true</text>
<rect x="182.40" y="285.03" width="515.60" height="0.90" fill="#8a9bb2" />
<text x="182.60" y="281.75" fill="#3a3a3a" font-size="9.17" text-anchor="start" textLength="66.4" lengthAdjust="spacingAndGlyphs" >getDriverVersion</text>
<text x="441.10" y="281.75" fill="#3a3a3a" font-size="9.17" text-anchor="start" textLength="223.8" lengthAdjust="spacingAndGlyphs" >mysql-connector-java-5.1.7 ( Revision: ${svn.Revision} )</text>
<rect x="182.40" y="298.37" width="515.60" height="0.90" fill="#8a9bb2" />
<text x="182.60" y="295.08" fill="#3a3a3a" font-size="9.17" text-anchor="start" textLength="94.5" lengthAdjust="spacingAndGlyphs" >getResultSetHoldability</text>
<text x="441.10" y="295.08" fill="#3a3a3a" font-size="9.17" text-anchor="start" >1</text>
<rect x="182.40" y="311.70" width="515.60" height="0.90" fill="#8a9bb2" />
<text x="182.60" y="308.42" fill="#3a3a3a" font-size="9.17" text-anchor="start" textLength="103.3" lengthAdjust="spacingAndGlyphs" >allProceduresAreCallable</text>
<text x="441.10" y="308.42" fill="#3a3a3a" font-size="9.17" text-anchor="start" textLength="19.1" lengthAdjust="spacingAndGlyphs" >false</text>
<rect x="182.40" y="325.03" width="515.60" height="0.90" fill="#8a9bb2" />
<text x="182.60" y="321.75" fill="#3a3a3a" font-size="9.17" text-anchor="start" textLength="93.2" lengthAdjust="spacingAndGlyphs" >allTablesAreSelectable</text>
<text x="441.10" y="321.75" fill="#3a3a3a" font-size="9.17" text-anchor="start" textLength="19.1" lengthAdjust="spacingAndGlyphs" >false</text>
<rect x="182.40" y="338.37" width="515.60" height="0.90" fill="#8a9bb2" />
<text x="182.60" y="335.08" fill="#3a3a3a" font-size="9.17" text-anchor="start" textLength="161.7" lengthAdjust="spacingAndGlyphs" >autoCommitFailureClosesAllResultSets</text>
<text x="441.10" y="335.08" fill="#3a3a3a" font-size="9.17" text-anchor="start" textLength="19.1" lengthAdjust="spacingAndGlyphs" >false</text>
<rect x="182.40" y="351.70" width="515.60" height="0.90" fill="#8a9bb2" />
<text x="182.60" y="348.42" fill="#3a3a3a" font-size="9.17" text-anchor="start" textLength="168.9" lengthAdjust="spacingAndGlyphs" >dataDefinitionCausesTransactionCommit</text>
<text x="441.10" y="348.42" fill="#3a3a3a" font-size="9.17" text-anchor="start" textLength="14.7" lengthAdjust="spacingAndGlyphs" >true</text>
<rect x="182.40" y="365.03" width="515.60" height="0.90" fill="#8a9bb2" />
<text x="182.60" y="361.75" fill="#3a3a3a" font-size="9.17" text-anchor="start" textLength="146.9" lengthAdjust="spacingAndGlyphs" >dataDefinitionIgnoredInTransactions</text>
<text x="441.10" y="361.75" fill="#3a3a3a" font-size="9.17" text-anchor="start" textLength="19.1" lengthAdjust="spacingAndGlyphs" >false</text>
<rect x="182.40" y="378.37" width="515.60" height="0.90" fill="#8a9bb2" />
<text x="182.60" y="375.08" fill="#3a3a3a" font-size="9.17" text-anchor="start" textLength="123.9" lengthAdjust="spacingAndGlyphs" >doesMaxRowSizeIncludeBlobs</text>
<text x="441.10" y="375.08" fill="#3a3a3a" font-size="9.17" text-anchor="start" textLength="14.7" lengthAdjust="spacingAndGlyphs" >true</text>
<rect x="182.40" y="391.70" width="515.60" height="0.90" fill="#8a9bb2" />
<text x="182.60" y="388.42" fill="#3a3a3a" font-size="9.17" text-anchor="start" textLength="65.1" lengthAdjust="spacingAndGlyphs" >getCatalogTerm</text>
<text x="441.10" y="388.42" fill="#3a3a3a" font-size="9.17" text-anchor="start" textLength="37.9" lengthAdjust="spacingAndGlyphs" >database</text>
<rect x="182.40" y="405.03" width="515.60" height="0.90" fill="#8a9bb2" />
<text x="182.60" y="401.75" fill="#3a3a3a" font-size="9.17" text-anchor="start" textLength="92.2" lengthAdjust="spacingAndGlyphs" >getClientInfoProperties</text>
<rect x="182.40" y="418.37" width="515.60" height="0.90" fill="#8a9bb2" />
<text x="182.60" y="415.08" fill="#3a3a3a" font-size="9.17" text-anchor="start" textLength="104.8" lengthAdjust="spacingAndGlyphs" >getDatabaseMinorVersion</text>
<text x="441.10" y="415.08" fill="#3a3a3a" font-size="9.17" text-anchor="start" >1</text>
<rect x="439.20" y="112.60" width="0.90" height="305.40" fill="#8a9bb2" />
<rect x="24.00" y="416.20" width="676.00" height="0.60" fill="#d3deec" />
<rect x="24.00" y="416.80" width="676.00" height="1.20" fill="#e6e9ee" />
</g>
</svg></body></html>
